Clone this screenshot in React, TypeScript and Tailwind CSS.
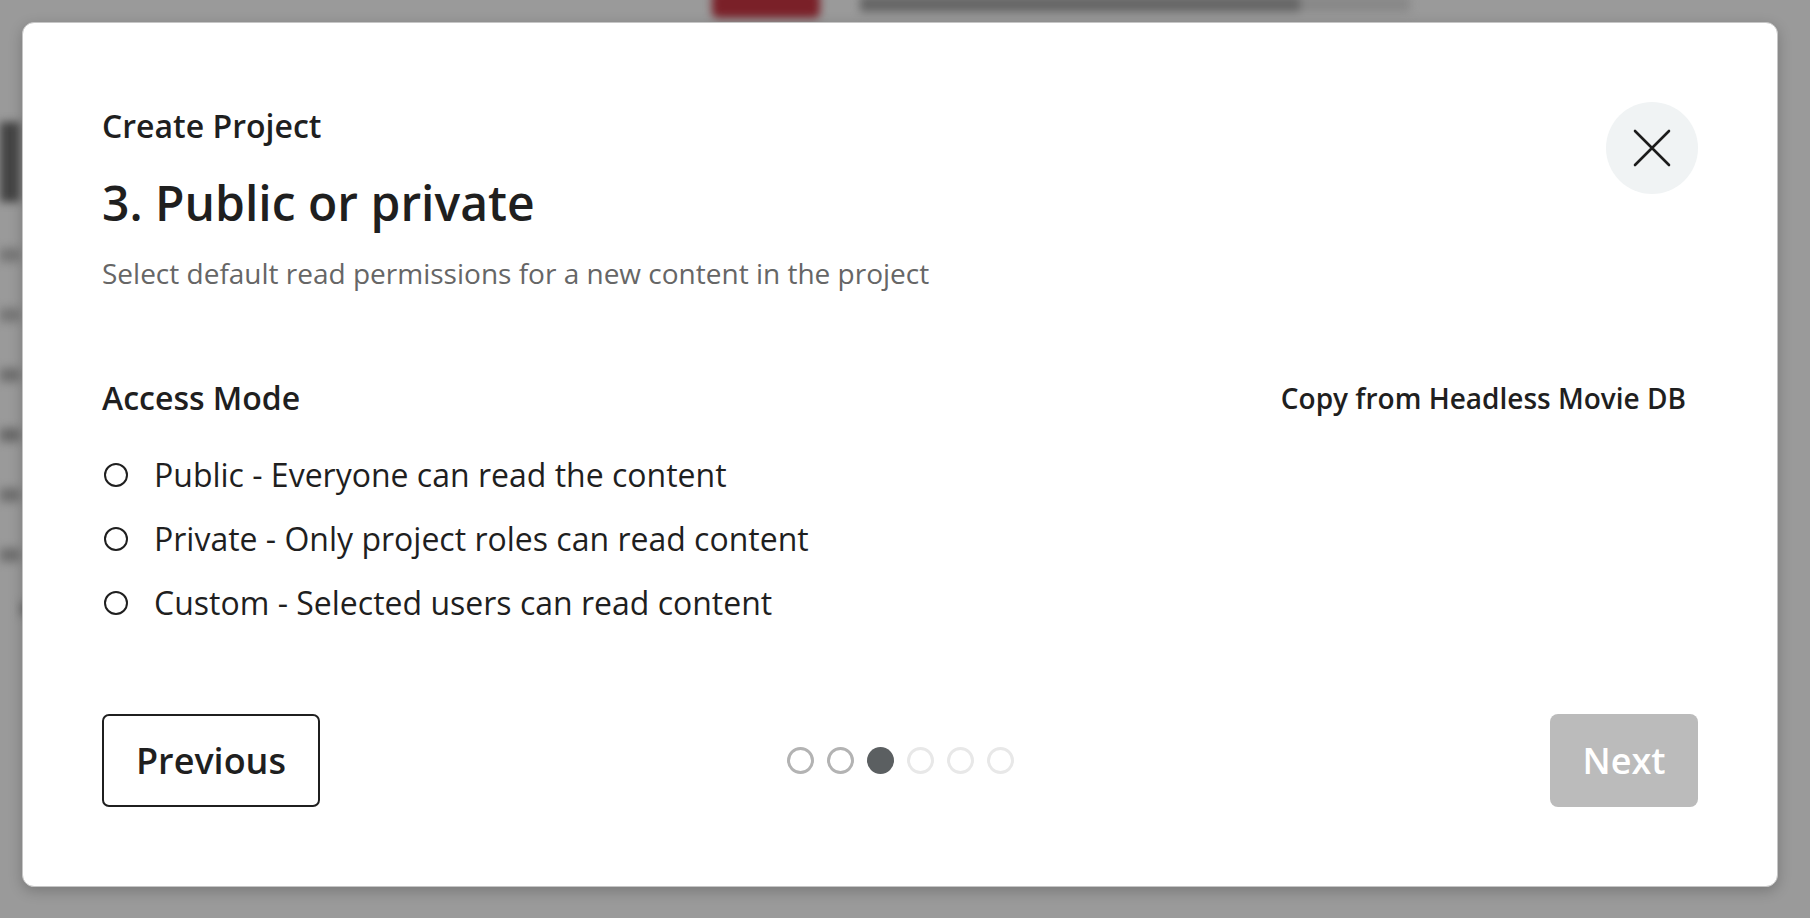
import { useState } from 'react'

type Mode = 'public' | 'private' | 'custom'

const modes: { id: Mode; label: string }[] = [
  { id: 'public', label: 'Public - Everyone can read the content' },
  { id: 'private', label: 'Private - Only project roles can read content' },
  { id: 'custom', label: 'Custom - Selected users can read content' },
]

const steps = 6
const current = 2

function CloseIcon() {
  return (
    <svg width="40" height="40" viewBox="0 0 40 40" fill="none">
      <path d="M3 3L37 37M37 3L3 37" stroke="#1c1c1c" strokeWidth="2.6" strokeLinecap="round" />
    </svg>
  )
}

// blurred page that sits under the dialog
function Backdrop() {
  return (
    <div className="fixed inset-0 overflow-hidden bg-[#9a9a9a]">
      <div className="blur-[4px]">
        <div className="flex h-[22px] items-start pl-[712px]">
          <div className="-mt-[10px] h-[28px] w-[108px] rounded-md bg-[#7a2028]" />
          <div className="ml-[40px] -mt-[4px] h-[16px] w-[440px] bg-[#666]" />
          <div className="-mt-[4px] h-[16px] w-[110px] bg-[#888]" />
        </div>
        <div className="flex flex-col gap-[46px] pt-[100px]">
          <div className="h-[80px] w-[20px] bg-[#444]" />
          <div className="h-[14px] w-[20px] bg-[#777]" />
          <div className="h-[14px] w-[20px] bg-[#777]" />
          <div className="h-[14px] w-[20px] bg-[#707070]" />
          <div className="h-[14px] w-[20px] bg-[#6a6a6a]" />
          <div className="h-[14px] w-[20px] bg-[#707070]" />
          <div className="h-[14px] w-[20px] bg-[#707070]" />
        </div>
        <div className="mt-[40px] ml-[20px] h-[14px] w-[240px] bg-[#707070]" />
      </div>
    </div>
  )
}

export default function App() {
  const [mode, setMode] = useState<Mode | null>(null)

  return (
    <div className="relative h-[918px] w-[1810px] overflow-hidden font-['Open_Sans',sans-serif] text-[#1f1f1f]">
      <Backdrop />

      <div className="fixed inset-0 pt-[22px] pl-[22px]">
        <div className="flex h-[865px] w-[1756px] flex-col rounded-[12px] border border-[#c6c6c6] bg-white p-[79px] shadow-[0_4px_14px_rgba(0,0,0,0.22)]">
          {/* Header */}
          <div className="flex items-start justify-between">
            <div>
              <div className="text-[32px] font-semibold leading-[48px]">Create Project</div>
              <h1 className="mt-[25px] text-[48px] font-semibold leading-[56px]">3. Public or private</h1>
              <p className="mt-[25px] text-[28px] leading-[34px] text-[#666]">
                Select default read permissions for a new content in the project
              </p>
            </div>
            <button className="flex h-[92px] w-[92px] items-center justify-center rounded-full bg-[#f0f3f4]">
              <CloseIcon />
            </button>
          </div>

          {/* Access mode */}
          <div className="mt-[90px] flex items-center justify-between">
            <div className="text-[32px] font-semibold leading-[36px]">Access Mode</div>
            <button className="mr-[12px] text-[28px] font-semibold leading-[36px]">Copy from Headless Movie DB</button>
          </div>

          <div className="mt-[27px] flex flex-col">
            {modes.map((m) => (
              <label key={m.id} className="flex h-[64px] cursor-pointer items-center" onClick={() => setMode(m.id)}>
                <span className="ml-[2px] flex h-[24px] w-[24px] items-center justify-center rounded-full border-2 border-[#1f1f1f]">
                  {mode === m.id && <span className="h-[12px] w-[12px] rounded-full bg-[#1f1f1f]" />}
                </span>
                <span className="ml-[26px] text-[32px] leading-[40px]">{m.label}</span>
              </label>
            ))}
          </div>

          {/* Footer */}
          <div className="mt-auto grid grid-cols-[1fr_auto_1fr] items-center">
            <div>
              <button className="h-[93px] w-[218px] rounded-[7px] border-2 border-[#1f1f1f] text-[36px] font-semibold">
                Previous
              </button>
            </div>
            <div className="flex gap-[13px]">
              {Array.from({ length: steps }).map((_, i) => (
                <span
                  key={i}
                  className={
                    i === current
                      ? 'h-[27px] w-[27px] rounded-full bg-[#5b5f61]'
                      : i < current
                        ? 'h-[27px] w-[27px] rounded-full border-[3px] border-[#b3b3b3]'
                        : 'h-[27px] w-[27px] rounded-full border-[3px] border-[#e8e8e8]'
                  }
                />
              ))}
            </div>
            <div className="flex justify-end">
              <button className="h-[93px] w-[148px] rounded-[8px] bg-[#bbbbbb] text-[36px] font-semibold text-white">
                Next
              </button>
            </div>
          </div>
        </div>
      </div>
    </div>
  )
}
